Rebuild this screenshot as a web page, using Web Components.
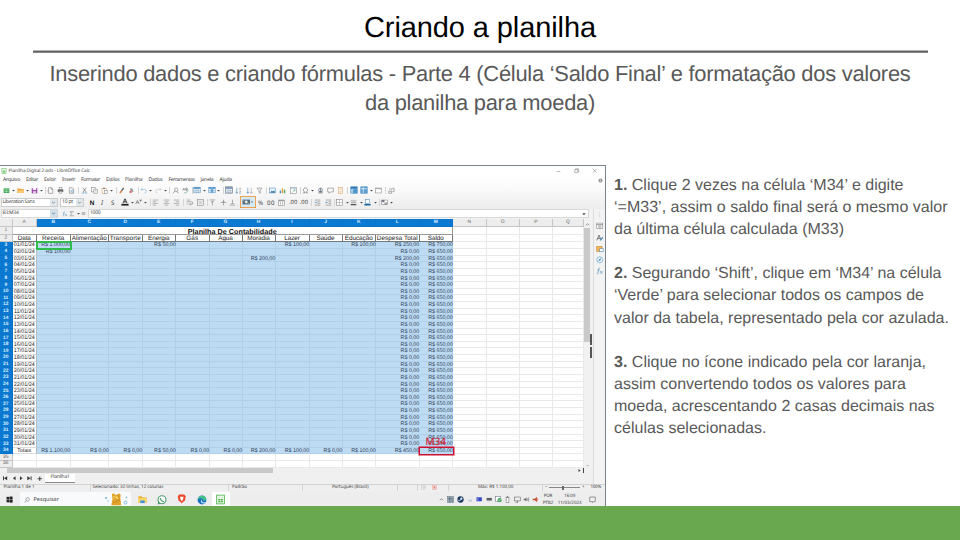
<!DOCTYPE html>
<html lang="pt-BR">
<head>
<meta charset="utf-8">
<title>Criando a planilha</title>
<style>
html,body{margin:0;padding:0;background:#fff}
body{width:960px;height:540px;overflow:hidden;font-family:"Liberation Sans",Arial,sans-serif;text-rendering:geometricPrecision}
</style>
</head>
<body>
<lesson-slide></lesson-slide>
<script>
const define=(name,css,html,after)=>customElements.define(name,class extends HTMLElement{
  connectedCallback(){
    if(this.shadowRoot)return;
    const r=this.attachShadow({mode:'open'});
    r.innerHTML='<style>*{box-sizing:border-box}'+css+'</style>'+(typeof html==='function'?html(this):html);
    if(after)after(this,r);
  }
});

/* One line of text spaced out to a given width */
define('fit-text',':host{display:block;white-space:nowrap;flex:none}span{display:inline-block;white-space:pre}','<span><slot></slot></span>',(h,r)=>{
  const w=+h.getAttribute('w');if(!w)return;
  const s=r.querySelector('span'),n=h.textContent.trim().length;
  h.style.width=w+'px';
  s.style.letterSpacing=((w-s.getBoundingClientRect().width)/n)+'px';
});

const G='#777',B='#3b82b8';
const line=(d,c=G,w=.8)=>`<path d="${d}" fill="none" stroke="${c}" stroke-width="${w}"/>`;
const fill=(d,c)=>`<path d="${d}" fill="${c}"/>`;
const rect=(x,y,w,h,c,s='none')=>`<rect x="${x}" y="${y}" width="${w}" height="${h}" fill="${c}" stroke="${s}" stroke-width=".7"/>`;
const tbl=(c,b)=>rect(1,1.5,8,7,'#fff',c)+rect(1,1.5,8,2,b||c)+line('M1 6H9M3.7 3V8.5M6.4 3V8.5',c,.6);
const ICONS={
  calc:rect(1.5,1,7,8,'#e6f6e3','#43ae3e')+rect(3,4.5,4,3,'#43ae3e')+line('M3 6H7M5 4.5V7.5','#fff',.5),
  newdoc:rect(1,2,8,6.5,'#35a853')+line('M2 4H8M2 6.3H8M5 4V8','#d9f3dc',.7),
  folder:fill('M0.5 2H4.5L5.5 3H9.5V8.5H.5z','#eda63c')+fill('M2 4.5H10L9 8.5H.8z','#fbc973'),
  save:rect(1,1.5,8,7.5,'#a04cad')+rect(2.6,1.5,4.8,2.6,'#fff')+rect(3,6,4,3,'#ead4ef'),
  doc:line('M2 1H6.3L8.3 3V9H2zM6 1V3.3H8.3')+line('M2 5.5H.5',"#c55",.9),
  print:rect(3,1,4,2.5,'#fff',G)+rect(1,3.5,8,3.5,'#666')+rect(3,6,4,2.7,'#fff',G),
  preview:line('M2 1H6.3L8 3V9H2z')+'<circle cx="6" cy="6" r="1.7" fill="#e8f3fb" stroke="#3b82b8" stroke-width=".7"/>',
  cut:line('M2.5 1L7 7M7.5 1L3 7','#555')+line('M1.5 8A1.2 1.2 0 1 0 3 6.8M8.5 8A1.2 1.2 0 1 1 7 6.8',B),
  copy:rect(1,1,5,6,'#fff',G)+rect(4,3,5,6,'#fff',G)+line('M5 5H8M5 7H8',G,.5),
  paste:rect(1.5,2,6,7,'#fff','#d28a3d')+rect(3,1,3,1.6,'#777')+rect(5,5,4,4.3,'#fff',G),
  brush:fill('M7.5 .7L9 2L5.8 6L4.2 4.8z','#666')+fill('M4 5L6 6.5L3.5 9.3L1.8 8z','#e27d38'),
  clear:fill('M3 2L6 2L8 7H6.5L5.8 5.2H3.8z','#888')+fill('M1.5 7L4 5L6 7L4 9z','#dc5b57'),
  undo:line('M1.5 3.5H6.5A2.5 2.5 0 0 1 6.5 8.5M3.5 1.3L1.3 3.5L3.5 5.7','#89b7db',.9),
  redo:line('M8.5 3.5H3.5A2.5 2.5 0 0 0 3.5 8.5M6.5 1.3L8.7 3.5L6.5 5.7','#c5c5c5',.9),
  find:'<circle cx="6" cy="3.8" r="2.4" fill="none" stroke="#777" stroke-width=".8"/>'+line('M4.3 5.5L1.5 9M7 6L9 9','#555'),
  spell:line('M1 5L2.5 1.5L4 5M1.7 3.8H3.4M5.5 1.5V5H7A1 1 0 0 0 7 3H5.5H7A.8 .8 0 0 0 7 1.5z')+line('M3 7L5 9L9 5','#4da66a',.9),
  tblblue:tbl('#4f8fc2'),tblcol:tbl('#4f8fc2')+rect(3.7,1.5,2.7,7,'#71a9d6'),tblgray:rect(.5,1,9,8,'#fff',G)+tbl('#6f8fb0'),
  asc:line('M2.5 1V9M.8 7L2.5 9L4.2 7',B)+line('M6 4L7.3 1L8.6 4M6 6H8.5L6 9H8.5',G,.6),
  desc:line('M2.5 1V9M.8 7L2.5 9L4.2 7',B)+line('M7.5 1V9M6 7.3L7.5 9L9 7.3',G,.6),
  filter:line('M1.5 1.5H8.5L6 5V9L4.2 7.5V5z','#777'),
  image:rect(1,1.5,8,7,'#eef7ff',B)+fill('M1.5 8.3L4 5L5.5 6.5L7.5 4.5L8.8 8.3z','#3878a8'),
  chart:rect(1,5,2,4,'#4a94c8')+rect(4,2,2,7,'#e2a13d')+rect(7,4,2,5,'#58a968'),
  pivot:rect(1,1,8,8,'#fff',G)+rect(1,1,8,2,'#bcd7eb')+line('M3 8L7 4M7 6V4H5','#3b9862'),
  omega:line('M1.5 8.5H4V7.2A3 3 0 1 1 6 7.2V8.5H8.5','#666',.9),
  link:'<circle cx="5" cy="4.3" r="2.8" fill="#d9e8f4" stroke="#667" stroke-width=".8"/>'+line('M2 7H8M2 8.5H8M5 1.5V7','#555'),
  comment:line('M1 1.5H9V7H5L3 9V7H1z'),
  header:rect(2,1,6,8,'#fff','#dc9147')+line('M3 3H7M3 7H7','#dc9147'),
  freeze:rect(1,1,8,8,'#a8cfec',B)+rect(1,1,8,2.4,'#2f78b5')+rect(4,4,5,5,'#4d94c9'),
  split:rect(1,1,8,8,'#5da0d2',B)+line('M1 3.5H9M4 1V9','#fff'),
  win:rect(1,1.5,8,7,'#fff',G)+rect(1,1.5,8,1.6,'#aaa'),
  draw:line('M1 6H5V9H1zM4 3.5L8.5 1.5L9 6L6 7')+'<circle cx="3.5" cy="3" r="1.7" fill="none" stroke="#aaa" stroke-width=".7"/>',
  fcolor:line('M2.5 6.5L5 1L7.5 6.5M3.4 4.8H6.6','#222',1.1)+rect(.5,7.3,9,2.2,'#222'),
  hilite:line('M1 7L3.5 2L6 7M2 5.2H5','#555')+fill('M6 1H10L8 4z','#777'),
  left:line('M1 1.5H9M1 4H6M1 6.3H9M1 8.8H6',G,.7),
  center:line('M1 1.5H9M2.5 4H7.5M1 6.3H9M2.5 8.8H7.5',G,.7),
  right:line('M1 1.5H9M4 4H9M1 6.3H9M4 8.8H9',G,.7),
  wrap:line('M1 1.5H6M1 4H8A1.6 1.6 0 0 1 8 7.5H5M1 7H3M6.5 6L5 7.5L6.5 9'),
  merge:rect(1,1,8,8,'#fff',G)+line('M1 3H9M1 7H9M3 5H7',G,.6),
  top:line('M1 1.3H9M3 3.5H7M5 9V4M5 4L3.5 5.5',G,.8),
  mid:line('M1 5H9M5 1V9M3.5 3.5H6.5'),
  bot:line('M1 8.7H9M3 6.5H7M5 1V6'),
  money:rect(.3,2,9.4,6,'#586c78')+'<circle cx="5" cy="5" r="1.8" fill="#dfeaf1"/>'+line('M1.2 3.2H2.5M7.5 6.8H8.8','#fff',.6),
  date:rect(1,1.5,8,7.5,'#fff',G)+rect(1,1.5,8,1.8,'#999')+line('M3.5 4.5V8M6.5 4.5V8'),
  indent:line('M1 1.5H9M5 4H9M5 6.3H9M1 8.8H9')+line('M1 5H4M2.7 3.7L4 5L2.7 6.3',B),
  outdent:line('M1 1.5H9M5 4H9M5 6.3H9M1 8.8H9')+line('M4 5H1M2.3 3.7L1 5L2.3 6.3',B),
  border:rect(1,1,8,8,'#fff',G)+line('M5 1V9M1 5H9',G,.5),
  bstyle:line('M1 2H9',G,.6)+line('M1 4.5H9',G,1.1)+line('M1 8H9','#555',2),
  bcolor:rect(2,1,6,5.5,'#fff',B)+rect(.5,7,9,2.3,'#27679a'),
  cond:rect(1,1.5,8,6,'#fff',G)+rect(1,1.5,4,3,'#778')+rect(5,5,4,3.5,'#999'),
  caret:fill('M2.2 3.8H7.8L5 7z','#444'),drop:line('M3 4L5 6L7 4','#555',.9),
  min:line('M1.5 5H8.5','#666',.9),max:line('M1.5 3H7V8.5H1.5zM3 3V1.5H8.5V7H7','#666',.8),close:line('M1.5 1.5L8.5 8.5M8.5 1.5L1.5 8.5','#666',.8),
  globe:'<circle cx="5" cy="5" r="4" fill="#777"/>'+line('M1 5H9M5 1V9M2.5 2.5Q5 4.3 7.5 2.5M2.5 7.5Q5 5.7 7.5 7.5','#fff',.6),
  first:rect(1.5,2,1.4,6,'#333')+fill('M8 2V8L3 5z','#333'),prev:fill('M7 2V8L3 5z','#333'),next:fill('M3 2V8L7 5z','#333'),last:fill('M2 2V8L7 5z','#333')+rect(7.1,2,1.4,6,'#333'),
  plus:line('M5 1V9M1 5H9','#333',1.6),
  tune:rect(1,1.5,8,7,'#fff',G)+line('M1 3.5H9M3 5.2H7M3 6.9H7','#666'),
  styles:line('M1 8.5L4 1.5L6.3 7M2 6H5.6','#555',1)+fill('M5 8L8.7 3.5L9.7 4.5L6.3 9z','#3b82b8'),
  gallery:rect(1,2,7,6.5,'#f4b759','#c47d1a')+rect(5,5,4.5,4,'#fff',B),
  nav:'<circle cx="5" cy="5" r="4" fill="#edf5fb" stroke="#5796c3" stroke-width=".8"/>'+fill('M7 3L5.8 5.8L3 7L4.2 4.2z','#477ea7'),
  fx:line('M5.2 1.2Q3.6 1 3.3 3.5L2.6 8Q2.3 9.3 1 9M2 4H4.8M5.3 5.3L8.8 9M8.8 5.3L5.3 9',B,.8),
  sigma:line('M8 2.3V1.2H2L5 5L2 8.8H8V7.7','#555',.8),eq:line('M1.5 3.7H8.5M1.5 6.4H8.5','#555',1.1),
  windows:rect(.8,1.2,4,3.7,'#222')+rect(5.2,.8,4.2,4.1,'#222')+rect(.8,5.3,4,3.7,'#222')+rect(5.2,5.3,4.2,4.2,'#222'),
  search:'<circle cx="6" cy="4" r="2.9" fill="none" stroke="#555" stroke-width=".8"/>'+line('M4 6L1 9.3','#555'),
  bear:fill('M1.5 1L3 0L4 1.3H6L7.3 .2L8.6 1.3L8.2 4L9 9.8H1L2 5z','#e1a32a')+fill('M2.5 2L4 3L5.8 2.5L7.5 4L5.8 5.2L3 4.6z','#fbd65b')+line('M3 3.5L7 6L2.4 8M6 1L8 7','#c98a25',.6),
  explorer:fill('M.5 1.5H4L5 2.7H9.5V8.5H.5z','#eeb02e')+rect(.5,3.5,9,5,'#ffd668')+rect(2.5,6,5,3,'#4798cf'),
  whats:'<circle cx="5" cy="4.8" r="4" fill="#fff" stroke="#4a9b69" stroke-width="1.1"/>'+fill('M.7 9.6L1.3 6.5L3.6 8.8z','#4a9b69')+line('M3.3 3Q3.6 6.1 7 6.7','#4a9b69',1.2),
  brave:fill('M2.4 .5H7.6L9.2 2.3L8.4 6.5L5 9.7L1.6 6.5L.8 2.3z','#ed482a')+fill('M3 3H7L6.2 6L5 7.5L3.8 6z','#fff'),
  edge:'<circle cx="5" cy="5" r="4.4" fill="#1972bd"/>'+fill('M.7 4.2A4.5 4.5 0 0 1 9.4 4Q9 6 6.4 5.8Q6.5 3.2 3.8 3.3Q2 3.4 .7 4.2z','#43bf8c')+fill('M5 4.5Q4 7 7 7.6L9 6.8Q6 10 4 7Q3.5 5.5 5 4.5z','#e8f7ff'),
  up:line('M1.5 6.5L5 3.5L8.5 6.5','#444',1),
  t1:rect(1,1,8,8,'#9aabb5','#526873')+line('M1 4H9M4 1V9M6 6L9 9','#415764'),
  steam:'<circle cx="5" cy="5" r="4.5" fill="#17395f"/><circle cx="6.3" cy="3.7" r="1.6" fill="#fff"/>'+line('M1 5.5L4 7L6 4','#fff',1),
  t3:fill('M1 3L4 5L9 4L8 7L4 8z','#b8c9d4'),t4:rect(1,2,8,6,'#3348bb')+rect(1,2,3,6,'#6675df'),t5:rect(1,3,8,4,'#4b5158')+line('M1 5H9','#999',.6),
  t6:rect(1,1,7,7,'#fff','#567')+'<circle cx="6.5" cy="6" r="3" fill="#48a565"/>'+line('M5 6L6 7L8 5','#fff'),
  t7:rect(3,2,4,7,'#fff','#555')+line('M4 1H6','#555',1.3),t8:rect(1,1.5,8,5.5,'none','#555')+line('M5 7V9M2 9H6','#555'),
  t9:fill('M1 4H3L5 2V8L3 6H1z','#666')+line('M6.3 3.3V6.7M8 2V8','#666'),
  t10:fill('M1 4H4L7 1V9L4 6H1z','#c84e35')+line('M8 3V7','#c84e35'),
  note:line('M1 1.5H9V8H6.5L5 9.5V8H1z','#555',.8),
  dots:'<circle cx="1" cy="3" r="1.1" fill="#7bbce0"/><circle cx="3" cy="6" r=".7" fill="#7bbce0"/><circle cx="20.5" cy="7.5" r="1.5" fill="none" stroke="#7bbce0" stroke-width="1"/><circle cx="21.5" cy="2.3" r=".9" fill="#7bbce0"/>',
  dsel:rect(1,1,8,8,'none','#bbb')+line('M4 3V7M6.5 3V7','#999'),dmod:rect(1,1,8,8,'#fbd0cc','#e38c84')+line('M5 3V7M3 4L7 6','#b33')
};
define('ui-icon',':host{display:block;flex:none}svg{display:block;width:100%;height:100%;overflow:visible}',h=>`<svg viewBox="0 0 10 10">${ICONS[h.getAttribute('name')]||''}</svg>`);

/* Horizontal strip: items are [left, width, markup] */
const strip=items=>{let p=0;return items.map(([x,w,m])=>{const s=`<div class="i" style="width:${w}px;margin-left:${(x-p).toFixed(2)}px">${m}</div>`;p=x+w;return s}).join('')};
const ic=(n,cx,w=7)=>[cx-w/2,w,`<ui-icon name="${n}" style="width:${w}px;height:${w}px"></ui-icon>`];
const tx=(t,x,w,st='')=>[x,w,`<fit-text w="${w}" style="${st}">${t}</fit-text>`];
const sep=x=>[x,.6,'<div style="width:.6px;height:7px;background:#d4d4d4"></div>'];
const STRIP=':host{display:flex;align-items:center;flex:none;font:5px/7px "Noto Sans","Open Sans",sans-serif;color:#444}.i{flex:none}';

define('title-bar',STRIP+':host{height:10px}',strip([ic('calc',4,6),tx('Planilha Digital 2.ods - LibreOffice Calc',8.5,81.5,'font-size:4.7px'),ic('min',558,5),ic('max',576.5,5.5),ic('close',594.8,5.5)]));
define('menu-bar',STRIP+':host{height:8px}',strip([['Arquivo',3,17],['Editar',26,12],['Exibir',44,12],['Inserir',62,13],['Formatar',81,19],['Estilos',106,13.5],['Planilha',125,17.5],['Dados',148.5,14],['Ferramentas',168.5,26],['Janela',200.5,13],['Ajuda',219.5,12.5]].map(a=>tx(a[0],a[1],a[2],'font-size:5.1px')).concat([ic('globe',600.3,5)])));
const c=x=>ic('caret',x,5);
define('standard-toolbar',STRIP+':host{height:12px}',strip([ic('newdoc',6),c(13),ic('folder',20),c(27),ic('save',34),c(41),sep(45),ic('doc',50.5),ic('print',61),ic('preview',71.5),sep(78),ic('cut',84.3),ic('copy',94.5),ic('paste',105),c(112),sep(116),ic('brush',121.8),ic('clear',132),sep(138),ic('undo',144),c(151),ic('redo',159),c(166),sep(169.5),ic('find',175.3),ic('spell',186),sep(192),ic('tblblue',197.5,8),c(204.5),ic('tblcol',212,8),c(219),sep(223),ic('tblgray',228.7,8),ic('asc',239),ic('desc',249.3),ic('filter',260),sep(266),ic('image',272.5),ic('chart',283),ic('pivot',293.7),sep(300),ic('omega',306),c(313),ic('link',320.5),ic('comment',330.7),ic('header',341),sep(347),ic('freeze',354,8),ic('split',364,8),c(371.5),ic('win',378.7),sep(385),ic('draw',391.3)]));
const g=(t,x,w,s='')=>tx(t,x,w,'font-size:6.2px;'+s);
define('format-toolbar',STRIP+`:host{height:12px}
.box{display:flex;align-items:center;justify-content:space-between;height:9px;background:#fff;border:.6px solid #ccc;padding-left:1px}.box ui-icon{width:7px;height:7px;background:#e1e8ec}
.hot{display:flex;align-items:center;height:12.4px;background:#d6e9f7;border:1.3px solid #eda24d;padding-left:.7px}`,
strip([[.5,57.5,'<div class="box"><fit-text w="32">Liberation Sans</fit-text><ui-icon name="drop"></ui-icon></div>'],[60,24,'<div class="box"><fit-text w="11">10 pt</fit-text><ui-icon name="drop"></ui-icon></div>'],
g('N',89.5,5,'font-weight:bold;color:#222'),g('I',101,3,'font-style:italic'),g('S',111,4,'text-decoration:underline'),ic('fcolor',125,8),c(132.3),ic('hilite',138.3),c(146),sep(150),ic('left',155.7),ic('center',166.5),ic('right',177),sep(183),ic('wrap',189.7),ic('merge',200.5),sep(207),ic('top',213),ic('mid',223.3),ic('bot',233),
[240.2,15.6,'<div class="hot"><ui-icon name="money" style="width:8.5px;height:8px"></ui-icon><ui-icon name="caret" style="width:4px;height:4px"></ui-icon></div>'],
g('%',258,5),g('00',267,8),ic('date',281.3),g('.00',289,8.5,'font-size:5.8px'),g('.00',299.7,8.5,'font-size:5.8px'),sep(311.5),ic('indent',317.7),ic('outdent',328.3),sep(334),ic('border',340),c(347.3),ic('bstyle',354),c(361.8),ic('bcolor',368),c(375.5),sep(379),ic('cond',384.5),c(391.5)]));
define('formula-bar',STRIP+`:host{height:10px;background:#f2f2f2}
.box{display:flex;align-items:center;justify-content:space-between;height:9px;background:#fff;border:.5px solid #d8d8d8;padding-left:1px}.box ui-icon{width:7px;height:7px;background:#cfe0ec}.in ui-icon{background:none!important;width:6px!important;height:6px!important;margin-right:1px}`,
strip([[.5,57.5,'<div class="box"><fit-text w="16">B3:M34</fit-text><ui-icon name="drop"></ui-icon></div>'],ic('fx',65,5.5),ic('sigma',72,5.5),c(78),ic('eq',83.8,5),[88,501,'<div class="box in"><fit-text w="10.5">1000</fit-text><ui-icon name="caret"></ui-icon></div>']]));

/* Spreadsheet */
const edges=[0,12.5,37,70.5,109,142.5,176,209.5,242.5,275.5,309.5,342.5,376,419.5,453,486.5,520,553,584];
const cols=edges.slice(1).map((e,i)=>(e-edges[i])+'px').join(' ');
const heads=['Data','Receita','Alimentação','Transporte','Energia','Gás','Água','Moradia','Lazer','Saúde','Educação','Despesa Total','Saldo'];
const hw=[13,22.5,35,31,21.5,12,14.5,22.5,15.5,18,28,41,16];
const data={3:{B:'R$ 1.000,00',E:'R$ 50,00',I:'R$ 100,00',K:'R$ 100,00',L:'R$ 250,00',M:'R$ 750,00'},4:{B:'R$ 100,00'},5:{H:'R$ 200,00',L:'R$ 200,00'},
34:{B:'R$ 1.100,00',C:'R$ 0,00',D:'R$ 0,00',E:'R$ 50,00',F:'R$ 0,00',G:'R$ 0,00',H:'R$ 200,00',I:'R$ 100,00',J:'R$ 0,00',K:'R$ 100,00',L:'R$ 450,00'}};
define('sheet-grid',`:host{display:grid;grid-template-columns:${cols};grid-template-rows:8px 8.7px 7.3px repeat(34,6.63px);width:584px;height:249.5px;overflow:hidden;flex:none;font:5.35px/7.6px "Liberation Sans",sans-serif;color:#222;background:#fff}
div{border-right:1px solid #e9e9e9;border-bottom:1px solid #e9e9e9;overflow:visible;white-space:nowrap;text-align:right;min-width:0;min-height:0}
.h{background:#ededed;border-color:#c6c6c6;text-align:center;color:#666;font-size:4.9px;line-height:6px;display:flex;justify-content:center;align-items:center;padding-top:1px}
.h.s{background:#0b78d2;border-color:#0a72c8;color:#d9efff;font-weight:bold}
.t{grid-column:2/15;text-align:center;font:bold 7.2px/9px "Liberation Sans",sans-serif;color:#111;border:1px solid #999;border-top:0;border-left:0;display:flex;justify-content:center}
.n{display:flex;justify-content:center;font-size:6.35px;line-height:8.4px;border-color:#777;color:#222}
.d{text-align:center;border-right-color:#b3bac0;border-bottom-color:#ddd;color:#222}
.v{background:#bedbf4;border-color:#b1cfe9;color:#2c4054}.v.e{border-right-color:#bedbf4}.v span{margin-right:-.8px}
.g{outline:2px solid #2ebc4a;outline-offset:-1px;z-index:2}
.r{position:relative;z-index:3;border-color:#bedbf4}
.r i{position:absolute;left:-1px;top:-1px;width:35px;height:8.5px;border:1px solid #cf1030;box-shadow:0 0 0 .5px #cf1030}
.r b{position:absolute;right:6.2px;top:-11.6px;font:400 10px/11px "Noto Sans","Open Sans",sans-serif;letter-spacing:-.1px;color:#d32438;-webkit-text-stroke:.2px #d32438}`,()=>{
  let o='<div class="h"></div>';
  for(let i=0;i<17;i++)o+=`<div class="h ${i>0&&i<13?'s':''}">${String.fromCharCode(65+i)}</div>`;
  o+='<div class="h">1</div><div class="t"><fit-text w="89">Planilha De Contabilidade</fit-text></div>'+'<div></div>'.repeat(4);
  o+='<div class="h">2</div>'+heads.map((t,i)=>`<div class="n"><fit-text w="${hw[i]}">${t}</fit-text></div>`).join('')+'<div></div>'.repeat(4);
  for(let r=3;r<=36;r++){
    const s=r<35;
    o+=`<div class="h ${s?'s':''}">${r}</div>`;
    for(let i=0;i<17;i++){
      const L=String.fromCharCode(65+i);
      if(!s||i>12){o+='<div></div>';continue}
      if(!i){o+=`<div class="d">${r===34?'Totais':String(r-2).padStart(2,'0')+'/01/24'}</div>`;continue}
      let v=(data[r]||{})[L]||'';
      if(!v&&L==='L')v='R$ 0,00';if(!v&&L==='M')v='R$ 650,00';
      o+=`<div class="v ${L==='L'?'e':''} ${r===3&&i===1?'g':''} ${r===34&&i===12?'r':''}">${v?`<span>${v}</span>`:''}${r===34&&i===12?'<i></i><b>M34</b>':''}</div>`;
    }
  }
  return o;
});
define('scroll-column',':host{display:flex;width:9px;flex:none;background:#f1f1f1}.s{width:6px;display:flex;flex-direction:column;align-items:center}.s ui-icon{width:5px;height:5px;margin-top:3px}.th{width:6px;height:114px;background:#c9c9c9;margin-top:1px}.x{flex:1}.p{width:3px;padding-top:115px}.p i{display:block;width:2px;height:11px;background:#555;margin-bottom:2px}',
'<div class="s"><ui-icon name="up"></ui-icon><div class="th"></div><div class="x"></div><ui-icon name="drop"></ui-icon></div><div class="p"><i></i><i></i></div>');
define('side-bar',':host{display:flex;flex-direction:column;align-items:center;width:12px;flex:none;background:#f3f3f3;border-left:1px solid #ddd;padding-top:3px}ui-icon{width:7.5px;height:7.5px;margin-top:3.8px}p{margin:0;font:5px/7px "Noto Sans",sans-serif;color:#777;height:7px}',
'<p>⋮</p>'+['tune','styles','gallery','nav','fx'].map(n=>`<ui-icon name="${n}"></ui-icon>`).join(''));
define('sheet-tabs',STRIP+':host{display:block;background:#f0f0f0;height:15.5px}.sc{height:6px;margin-left:7px;width:577px;display:flex;align-items:center}.sc i{width:267px;height:5.5px;background:#c9c9c9}.sc ui-icon{width:5px;height:5px;margin-left:304px}.sc b{width:1.5px;height:5px;background:#444;margin-left:1px}.row{display:flex;align-items:center;height:9.5px}.tab{background:#fff;border-bottom:1px solid #888;height:9px;line-height:9px;display:flex;justify-content:center;align-items:center}',
'<div class="sc"><i></i><ui-icon name="next"></ui-icon><b></b></div><div class="row">'+strip([ic('first',5.5,6.5),ic('prev',14,6.5),ic('next',21.5,6.5),ic('last',29,6.5),ic('plus',39.3,5.5),[45,30,'<div class="tab"><fit-text w="19">Planilha1</fit-text></div>']])+'</div>');
define('status-bar',STRIP+':host{height:8.5px;border-top:1px solid #d2d2d2;background:#efefef;font-size:4.5px;padding-bottom:1px}.z{display:flex;align-items:center;height:5px}.z i{width:31px;height:.8px;background:#888}.z b{width:1.6px;height:4px;background:#666;margin-left:-18px}',
strip([tx('Planilha 1 de 1',3.5,31),sep(90),tx('Selecionado: 32 linhas, 12 colunas',92.5,71),sep(228),tx('Padrão',232,15),sep(302),tx('Português (Brasil)',332,36.5),sep(397),sep(417),ic('dsel',424,5),ic('dmod',434.5,5),sep(448),tx('Máx: R$ 1.100,00',478,35.5),sep(542),tx('−',545,3),[549.5,31,'<div class="z"><i></i><b></b></div>'],tx('+',582,3),tx('100%',590.5,10.5)]));
define('task-bar',STRIP+':host{height:15px;background:#ededee}.search{display:flex;align-items:center;width:111px;height:15px;background:#f9fafb;padding-left:3.5px;gap:4px}.search ui-icon{width:6px;height:6px}.app{height:15px;display:flex;align-items:center;justify-content:center;border-bottom:1px solid #2878bd}.app ui-icon{width:9.5px;height:9.5px}.two{text-align:center;line-height:6.8px;font-size:4.5px}.two fit-text{margin:auto}',
strip([ic('windows',9.5,7),[20,84,'<div class="search"><ui-icon name="search"></ui-icon><fit-text w="25.5" style="font-size:5.5px">Pesquisar</fit-text></div>'],[105,5,'<ui-icon name="dots" style="width:10px;height:10px"></ui-icon>'],ic('bear',116.7,12.5),ic('explorer',142.7,9),ic('whats',162.5,10),[174,16,'<div class="app"><ui-icon name="brave"></ui-icon></div>'],ic('edge',201.7,10),[212,18,'<div class="app" style="background:#fff"><ui-icon name="calc" style="width:11px;height:11px"></ui-icon></div>'],
ic('up',441.5,5),ic('t1',451,7),ic('steam',460.5,7),ic('t3',470,6),ic('t4',479.5,6.5),ic('t5',489,6.5),ic('t6',498.5,7),ic('t7',508,7),ic('t8',517.3,7),ic('t9',526.5,7),ic('t10',536,7),
[542.5,11,'<div class="two"><fit-text w="8.5">POR</fit-text><fit-text w="10.5">PTB2</fit-text></div>'],[557.5,24.5,'<div class="two"><fit-text w="11">16:09</fit-text><fit-text w="24">11/03/2024</fit-text></div>'],ic('note',592.3,7)]));
define('calc-window',`:host{display:flex;flex-direction:column;width:606px;height:341px;border-top:1px solid #79838a;border-right:1px solid #79838a;overflow:hidden;background:#f0f0f0}
.top{background:linear-gradient(#fff 12%,#fbfbfb 50%,#ededed);flex:none;height:42.5px}.mid{display:flex;height:275px;flex:none}.l{width:593px;flex:none}.row{display:flex;height:249.5px}.row+sheet-tabs{margin-top:-.5px}`,
'<div class="top"><title-bar></title-bar><menu-bar></menu-bar><standard-toolbar></standard-toolbar><format-toolbar></format-toolbar></div><div class="mid"><div class="l"><formula-bar></formula-bar><div class="row"><sheet-grid></sheet-grid><scroll-column></scroll-column></div><sheet-tabs></sheet-tabs></div><side-bar></side-bar></div><status-bar></status-bar><task-bar></task-bar>');

define('lesson-steps',':host{display:flex;flex-direction:column;gap:22.1px;color:#595959;font-size:16px;line-height:22.1px}',
[[['<b>1.</b> Clique 2 vezes na célula ‘M34’ e digite',289.5],['‘=M33’, assim o saldo final será o mesmo valor',333.5],['da última célula calculada (M33)',230]],
[['<b>2.</b> Segurando ‘Shift’, clique em ‘M34’ na célula',327.5],['‘Verde’ para selecionar todos os campos de',310],['valor da tabela, representado pela cor azulada.',335]],
[['<b>3.</b> Clique no ícone indicado pela cor laranja,',312],['assim convertendo todos os valores para',292],['moeda, acrescentando 2 casas decimais nas',320.5],['células selecionadas.',152.5]]].map(p=>'<div>'+p.map(l=>`<fit-text w="${l[1]}">${l[0]}</fit-text>`).join('')+'</div>').join(''));
define('lesson-slide',`:host{display:flex;flex-direction:column;width:960px;height:540px;background:#fff;overflow:hidden}
header{height:165px;display:flex;flex-direction:column;align-items:center;flex:none}
h1{margin:0;font-size:29px;font-weight:400;line-height:34px;color:#000;padding-top:11px;height:50px;flex:none}
hr{border:0;margin:0;width:895px;height:3px;flex:none;background:linear-gradient(#b5b5b5 33%,#606060 33% 66%,#858585 66%)}
.sub{font-size:21.9px;line-height:29.4px;color:#595959;padding-top:6px;display:flex;flex-direction:column;align-items:center}
main{display:flex;height:341px;flex:none}lesson-steps{margin:10px 0 0 8px}footer{height:34px;background:#6aa84f}`,
'<header><h1><fit-text w="232">Criando a planilha</fit-text></h1><hr><div class="sub"><fit-text w="861">Inserindo dados e criando fórmulas - Parte 4 (Célula ‘Saldo Final’ e formatação dos valores</fit-text><fit-text w="230">da planilha para moeda)</fit-text></div></header><main><calc-window></calc-window><lesson-steps></lesson-steps></main><footer></footer>');
</script>
</body>
</html>
